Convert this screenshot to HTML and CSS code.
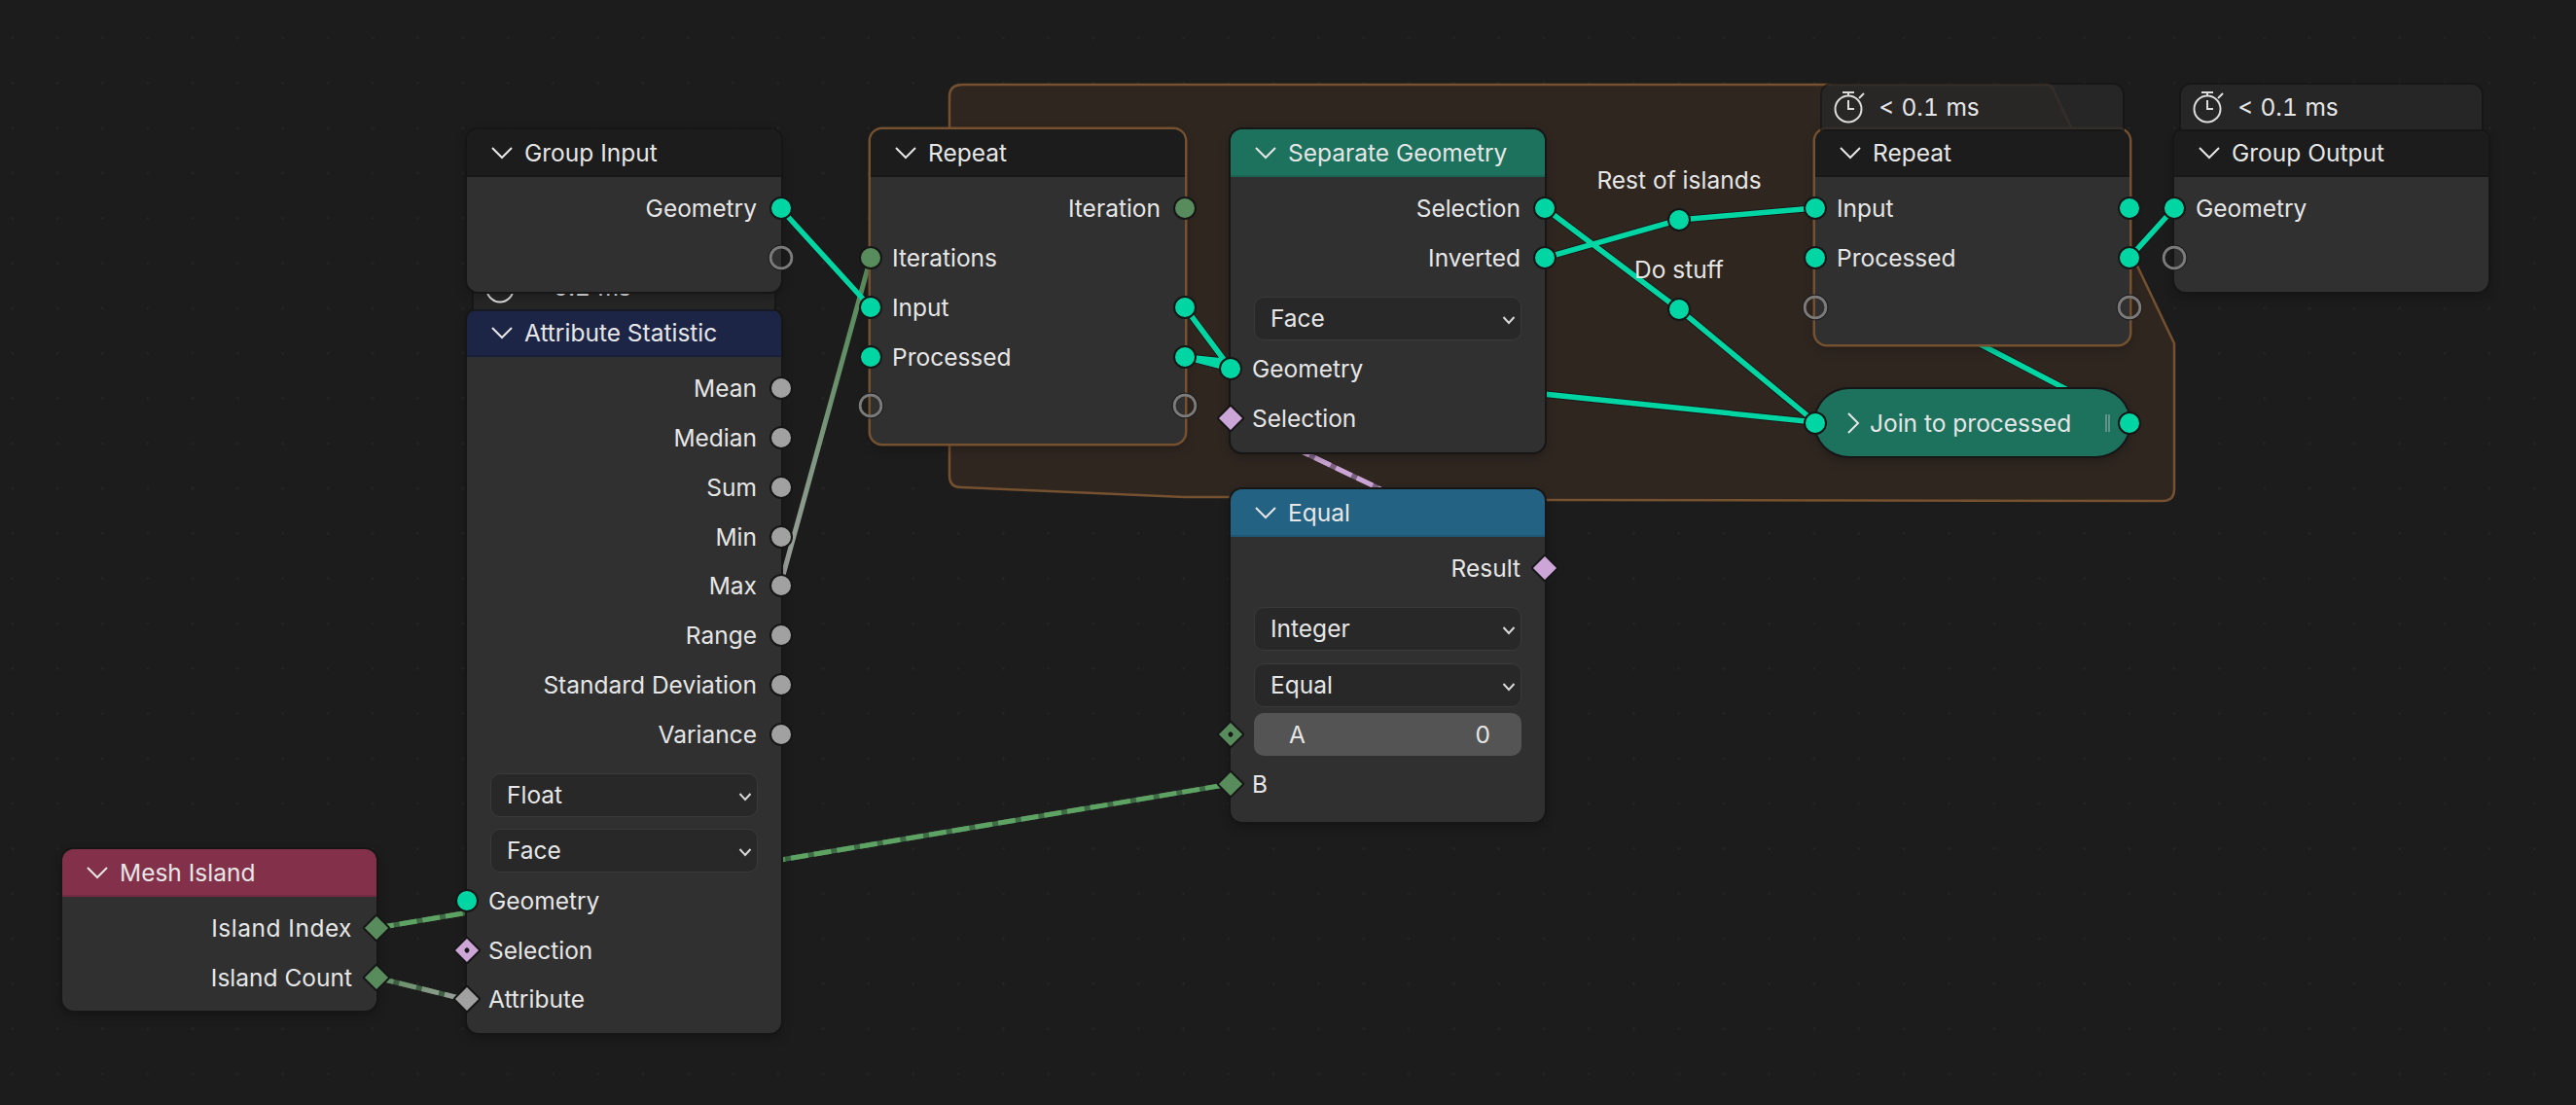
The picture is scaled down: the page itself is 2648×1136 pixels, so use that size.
FILE: index.html
```html
<!DOCTYPE html>
<html lang="en">
  <head>
    <meta charset="utf-8" />
    <meta name="viewport" content="width=device-width, initial-scale=1.0" />
    <title>Geometry Nodes</title>
    <link rel="stylesheet" href="styles.css">
  </head>
  <body>
    <main class="canvas">
      <svg class="wires" width="2648" height="1136" viewBox="0 0 2648 1136">
        <defs>
          <linearGradient id="max-wire" gradientUnits="userSpaceOnUse" x1="802" y1="602" x2="894" y2="265">
            <stop offset="0" stop-color="#a1a1a1" />
            <stop offset="0.75" stop-color="#5f8e62" />
            <stop offset="1" stop-color="#598c5c" />
          </linearGradient>
          <linearGradient id="count-wire" gradientUnits="userSpaceOnUse" x1="387" y1="1005" x2="480" y2="1028">
            <stop offset="0" stop-color="#598c5c" />
            <stop offset="1" stop-color="#a1a1a1" />
          </linearGradient>
        </defs>

        <path class="frame" d="M990 87 L2104 87 Q2109 87 2111 93 L2235 353 L2235 503 Q2235 515 2223 515 L1590 514 L1264 511 L1217 511 L988 501 Q976 501 976 489 L976 99 Q976 87 990 87 Z" />

        <!-- outlines first, wires on top -->
        <path class="wire-edge" d="M802 214 L895 316 M1218 316 L1265 379 M1218 367 L1265 379 M1218 367 L1866 434 M1588 214 L1726 318 L1866 434 M1588 265 L1726 226 L1865 214 M1865 265 L2189 434 M2189 265 L2235 214" />
        <path class="wire-max" d="M802 602 L895 265" />
        <path class="wire-geo" d="M802 214 L895 316 M1218 316 L1265 379 M1218 367 L1265 379 M1218 367 L1866 434 M1588 214 L1726 318 L1866 434 M1588 265 L1726 226 L1865 214 M1865 265 L2189 434 M2189 265 L2235 214" />

        <path class="wire-base wire-pink" d="M1265 429 L1588 584" />
        <path class="wire-dash wire-pink-dash" d="M1265 429 L1588 584" />
        <path class="wire-base wire-int" d="M387 954 L1265 806" />
        <path class="wire-dash wire-int-dash" d="M387 954 L1265 806" />
        <path class="wire-base wire-count" d="M387 1005 L480 1028" />
        <path class="wire-dash wire-count-dash" d="M387 1005 L480 1028" />
      </svg>

      <section class="node node-attribute">
        <div class="timing">
          <svg class="clock" width="34" height="40" viewBox="0 0 34 40"><circle cx="15" cy="23" r="13.5" /><path d="M9 6 H21 M15 6 V9 M15 14 V23 H21 M26 12 L31 7" /></svg>
          <span>&lt; 0.2 ms</span>
        </div>
        <header class="node-header header-blue">
          <svg class="chevron" width="24" height="14" viewBox="0 0 24 14"><path d="M2 2 L12 12 L22 2" /></svg>
          <span>Attribute Statistic</span>
        </header>
        <div class="row out"><span>Mean</span><i class="socket grey"></i></div>
        <div class="row out"><span>Median</span><i class="socket grey"></i></div>
        <div class="row out"><span>Sum</span><i class="socket grey"></i></div>
        <div class="row out"><span>Min</span><i class="socket grey"></i></div>
        <div class="row out"><span>Max</span><i class="socket grey"></i></div>
        <div class="row out"><span>Range</span><i class="socket grey"></i></div>
        <div class="row out"><span>Standard Deviation</span><i class="socket grey"></i></div>
        <div class="row out"><span>Variance</span><i class="socket grey"></i></div>
        <div class="select select-first"><span>Float</span><svg class="caret" width="14" height="10" viewBox="0 0 14 10"><path d="M1.5 2 L7 8 L12.5 2" /></svg></div>
        <div class="select select-last"><span>Face</span><svg class="caret" width="14" height="10" viewBox="0 0 14 10"><path d="M1.5 2 L7 8 L12.5 2" /></svg></div>
        <div class="row in"><i class="socket geo"></i><span>Geometry</span></div>
        <div class="row in"><i class="socket diamond pink dotted"></i><span>Selection</span></div>
        <div class="row in"><i class="socket diamond grey"></i><span>Attribute</span></div>
      </section>

      <section class="node node-group-input">
        <header class="node-header">
          <svg class="chevron" width="24" height="14" viewBox="0 0 24 14"><path d="M2 2 L12 12 L22 2" /></svg>
          <span>Group Input</span>
        </header>
        <div class="row out"><span>Geometry</span><i class="socket geo"></i></div>
        <div class="row out"><i class="socket empty"></i></div>
      </section>

      <section class="node node-mesh">
        <header class="node-header header-red">
          <svg class="chevron" width="24" height="14" viewBox="0 0 24 14"><path d="M2 2 L12 12 L22 2" /></svg>
          <span>Mesh Island</span>
        </header>
        <div class="row out"><span class="spaced">Island Index</span><i class="socket diamond green"></i></div>
        <div class="row out"><span>Island Count</span><i class="socket diamond green"></i></div>
      </section>

      <section class="node selected node-repeat-in">
        <header class="node-header">
          <svg class="chevron" width="24" height="14" viewBox="0 0 24 14"><path d="M2 2 L12 12 L22 2" /></svg>
          <span>Repeat</span>
        </header>
        <div class="row out"><span>Iteration</span><i class="socket green"></i></div>
        <div class="row in"><i class="socket green"></i><span>Iterations</span></div>
        <div class="row in"><i class="socket geo"></i><span>Input</span><i class="socket geo right"></i></div>
        <div class="row in"><i class="socket geo"></i><span>Processed</span><i class="socket geo right"></i></div>
        <div class="row in"><i class="socket empty"></i><i class="socket empty right"></i></div>
      </section>

      <section class="node node-separate">
        <header class="node-header header-teal">
          <svg class="chevron" width="24" height="14" viewBox="0 0 24 14"><path d="M2 2 L12 12 L22 2" /></svg>
          <span>Separate Geometry</span>
        </header>
        <div class="row out"><span>Selection</span><i class="socket geo"></i></div>
        <div class="row out"><span>Inverted</span><i class="socket geo"></i></div>
        <div class="select select-first select-last"><span>Face</span><svg class="caret" width="14" height="10" viewBox="0 0 14 10"><path d="M1.5 2 L7 8 L12.5 2" /></svg></div>
        <div class="row in"><i class="socket geo"></i><span>Geometry</span></div>
        <div class="row in"><i class="socket diamond pink"></i><span>Selection</span></div>
      </section>

      <section class="node node-equal">
        <header class="node-header header-steel">
          <svg class="chevron" width="24" height="14" viewBox="0 0 24 14"><path d="M2 2 L12 12 L22 2" /></svg>
          <span>Equal</span>
        </header>
        <div class="row out"><span>Result</span><i class="socket diamond pink"></i></div>
        <div class="select select-first select-wide"><span>Integer</span><svg class="caret" width="14" height="10" viewBox="0 0 14 10"><path d="M1.5 2 L7 8 L12.5 2" /></svg></div>
        <div class="select"><span>Equal</span><svg class="caret" width="14" height="10" viewBox="0 0 14 10"><path d="M1.5 2 L7 8 L12.5 2" /></svg></div>
        <div class="row in field-row">
          <i class="socket diamond green dotted"></i>
          <div class="field"><span>A</span><span>0</span></div>
        </div>
        <div class="row in"><i class="socket diamond green"></i><span>B</span></div>
      </section>

      <span class="reroute-label label-rest">Rest of islands</span>
      <i class="socket geo reroute reroute-rest"></i>
      <span class="reroute-label label-stuff">Do stuff</span>
      <i class="socket geo reroute reroute-stuff"></i>

      <section class="node selected node-repeat-out">
        <div class="timing">
          <svg class="clock" width="34" height="40" viewBox="0 0 34 40"><circle cx="15" cy="23" r="13.5" /><path d="M9 6 H21 M15 6 V9 M15 14 V23 H21 M26 12 L31 7" /></svg>
          <span>&lt; 0.1 ms</span>
        </div>
        <header class="node-header">
          <svg class="chevron" width="24" height="14" viewBox="0 0 24 14"><path d="M2 2 L12 12 L22 2" /></svg>
          <span>Repeat</span>
        </header>
        <div class="row in"><i class="socket geo"></i><span>Input</span><i class="socket geo right"></i></div>
        <div class="row in"><i class="socket geo"></i><span>Processed</span><i class="socket geo right"></i></div>
        <div class="row in"><i class="socket empty"></i><i class="socket empty right"></i></div>
      </section>

      <section class="node node-group-output">
        <div class="timing">
          <svg class="clock" width="34" height="40" viewBox="0 0 34 40"><circle cx="15" cy="23" r="13.5" /><path d="M9 6 H21 M15 6 V9 M15 14 V23 H21 M26 12 L31 7" /></svg>
          <span>&lt; 0.1 ms</span>
        </div>
        <header class="node-header">
          <svg class="chevron" width="24" height="14" viewBox="0 0 24 14"><path d="M2 2 L12 12 L22 2" /></svg>
          <span>Group Output</span>
        </header>
        <div class="row in"><i class="socket geo"></i><span>Geometry</span></div>
        <div class="row in"><i class="socket empty"></i></div>
      </section>

      <section class="pill">
        <i class="socket geo"></i>
        <svg class="pill-chevron" width="14" height="24" viewBox="0 0 14 24"><path d="M2 2 L12 12 L2 22" /></svg>
        <span>Join to processed</span>
        <b class="grip"></b>
        <i class="socket geo right"></i>
      </section>
    </main>
  </body>
</html>
```

FILE: styles.css
```css
:root {
  --bg: #1c1c1c;
  --node: #303030;
  --text: #e6e6e6;
  --geo: #00d6a3;
  --int: #598c5c;
  --bool: #cca6d6;
  --float: #a1a1a1;
  --frame-line: #75512f;
}

* {
  box-sizing: border-box;
}

body {
  margin: 0;
  background-color: var(--bg);
  font-family: "Inter", "Open Sans", sans-serif;
  font-size: 24.5px;
  color: var(--text);
}

.canvas {
  position: relative;
  width: 2648px;
  height: 1136px;
  overflow: hidden;
  background-color: var(--bg);
  background-image: radial-gradient(circle, #242424 1.2px, transparent 1.6px);
  background-size: 46.3px 46.3px;
  background-position: 36px 16px;
}

.wires {
  position: absolute;
  left: 0;
  top: 0;
}

.frame {
  fill: #2f2620;
  stroke: var(--frame-line);
  stroke-width: 2.5;
}

.wires path:not(.frame) {
  fill: none;
}

.wire-edge {
  stroke: rgba(20, 20, 20, 0.75);
  stroke-width: 7.5;
}

.wire-geo {
  stroke: var(--geo);
  stroke-width: 5.5;
}

.wire-max {
  stroke: url(#max-wire);
  stroke-width: 5;
}

.wire-base {
  stroke-width: 5;
}

.wire-dash {
  stroke-width: 5;
  stroke-dasharray: 18 6;
}

.wire-pink {
  stroke: #7d6484;
}

.wire-pink-dash {
  stroke: var(--bool);
}

.wire-int {
  stroke: #3f6b46;
}

.wire-int-dash {
  stroke: #5ea364;
}

.wire-count {
  stroke: #3f5f43;
}

.wire-count-dash {
  stroke: url(#count-wire);
}

/* nodes */
.node {
  position: absolute;
  width: 323px;
  background-color: var(--node);
  border-radius: 12px;
  box-shadow: 0 0 0 2px #161616, 0 4px 12px rgba(0, 0, 0, 0.3);
}

.node.selected {
  box-shadow: 0 0 0 2.5px var(--frame-line), 0 4px 12px rgba(0, 0, 0, 0.3);
}

.node-group-input {
  left: 480px;
  top: 133px;
  height: 167px;
}

.node-attribute {
  left: 480px;
  top: 318px;
  height: 744px;
}

.node-mesh {
  left: 64px;
  top: 873px;
  height: 166px;
}

.node-repeat-in {
  left: 895px;
  top: 133px;
  height: 323px;
}

.node-separate {
  left: 1265px;
  top: 133px;
  height: 332px;
}

.node-equal {
  left: 1265px;
  top: 503px;
  height: 342px;
}

.node-repeat-out {
  left: 1866px;
  top: 133px;
  height: 221px;
}

.node-group-output {
  left: 2235px;
  top: 133px;
  height: 167px;
}

.node-header {
  display: flex;
  align-items: center;
  gap: 11px;
  height: 49px;
  margin-bottom: 6.6px;
  padding-left: 24px;
  background-color: #1c1c1c;
  border-radius: 12px 12px 0 0;
  border-bottom: 2px solid rgba(0, 0, 0, 0.12);
}

.header-blue {
  background-color: #1d2546;
}

.header-red {
  background-color: #83314a;
}

.header-teal {
  background-color: #1d725e;
}

.header-steel {
  background-color: #246283;
}

.chevron,
.pill-chevron {
  fill: none;
  stroke: var(--text);
  stroke-width: 2;
}

.row {
  position: relative;
  display: flex;
  align-items: center;
  height: 50.85px;
  padding: 0 25px 0 22px;
}

.row.out {
  justify-content: flex-end;
}

.spaced {
  letter-spacing: 0.5px;
}

.select {
  display: flex;
  align-items: center;
  justify-content: space-between;
  height: 45px;
  margin: 0 24px 12px;
  padding: 0 5px 0 16px;
  background-color: #282828;
  border: 1px solid #3a3a3a;
  border-radius: 10px;
}

.select-first {
  margin-top: 14.5px;
}

.select-wide {
  margin-bottom: 13px;
}

.select-last {
  margin-bottom: 3.5px;
}

.caret {
  fill: none;
  stroke: #d8d8d8;
  stroke-width: 2;
  margin-top: 3px;
}

.row.field-row {
  height: 44px;
  padding: 0 24px;
  margin-top: -6px;
  margin-bottom: 3.5px;
}

.field {
  display: flex;
  flex: 1;
  align-items: center;
  justify-content: space-between;
  height: 44px;
  padding: 0 32px 0 36px;
  background-color: #545454;
  border-radius: 10px;
}

/* sockets */
.socket {
  position: absolute;
  top: 50%;
  left: 0;
  width: 24px;
  height: 24px;
  border: 2px solid #161616;
  border-radius: 50%;
  transform: translate(-50%, -50%);
}

.row.out .socket,
.socket.right {
  left: 100%;
}

.geo {
  background-color: var(--geo);
}

.grey {
  background-color: var(--float);
}

.green {
  background-color: var(--int);
}

.pink {
  background-color: var(--bool);
}

.socket.empty {
  width: 25px;
  height: 25px;
  border: 3px solid #7b7b7b;
  outline: 1px solid #1c1c1c;
}

.socket.diamond {
  width: 21px;
  height: 21px;
  border-radius: 2px;
  transform: translate(-50%, -50%) rotate(45deg);
}

.socket.dotted::after {
  content: "";
  position: absolute;
  left: 50%;
  top: 50%;
  width: 5px;
  height: 5px;
  margin: -2.5px 0 0 -2.5px;
  border-radius: 50%;
  background-color: #161616;
}

/* timing overlay above a node */
.timing {
  position: absolute;
  left: 7px;
  right: 7px;
  bottom: 100%;
  display: flex;
  align-items: center;
  gap: 12px;
  height: 46px;
  padding-left: 12px;
  background-color: rgba(40, 40, 40, 0.85);
  border-radius: 10px 10px 0 0;
  box-shadow: 0 0 0 2px rgba(22, 22, 22, 0.7);
  font-variant-numeric: tabular-nums;
  word-spacing: 1px;
}

.clock {
  fill: none;
  stroke: #dcdcdc;
  stroke-width: 2;
  margin-top: -2px;
}

/* reroutes */
.reroute {
  z-index: 1;
}

.reroute-rest {
  left: 1726px;
  top: 226px;
}

.reroute-stuff {
  left: 1726px;
  top: 318px;
}

.reroute-label {
  position: absolute;
  transform: translate(-50%, -50%);
  white-space: nowrap;
}

.label-rest {
  left: 1726px;
  top: 185px;
}

.label-stuff {
  left: 1726px;
  top: 277px;
}

/* collapsed node */
.pill {
  position: absolute;
  left: 1866px;
  top: 400px;
  display: flex;
  align-items: center;
  width: 323px;
  height: 69px;
  padding-left: 32px;
  background-color: #1d725e;
  border-radius: 35px;
  box-shadow: 0 0 0 2px #161616, 0 4px 12px rgba(0, 0, 0, 0.3);
}

.pill-chevron {
  margin-right: 10px;
}

.grip {
  position: absolute;
  left: 298px;
  top: 26px;
  width: 5px;
  height: 18px;
  border-left: 2px solid #5f9385;
  border-right: 2px solid #5f9385;
}
```
